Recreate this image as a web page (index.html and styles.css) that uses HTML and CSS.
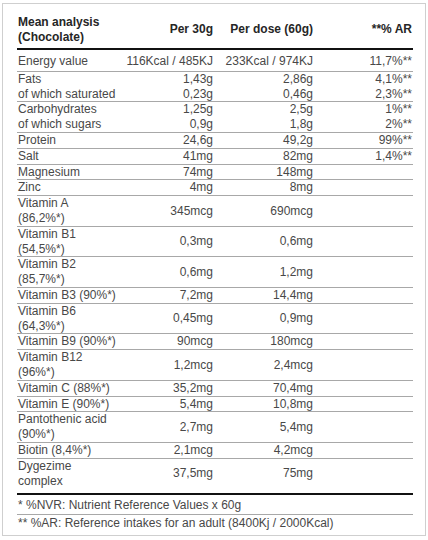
FILE: index.html
```html
<!DOCTYPE html>
<html>
<head>
<meta charset="utf-8">
<link rel="stylesheet" href="styles.css">
</head>
<body>
<div class="panel">
<table class="nutri">
<colgroup><col class="c1"><col class="c2"><col class="c3"><col class="c4"></colgroup>
<thead>
<tr class="head"><th class="name">Mean analysis<br>(Chocolate)</th><th>Per 30g</th><th>Per dose (60g)</th><th>**% AR</th></tr>
</thead>
<tbody>
<tr class="first"><td class="name">Energy value</td><td>116Kcal / 485KJ</td><td>233Kcal / 974KJ</td><td>11,7%**</td></tr>
<tr><td class="name">Fats<br>of which saturated</td><td>1,43g<br>0,23g</td><td>2,86g<br>0,46g</td><td>4,1%**<br>2,3%**</td></tr>
<tr><td class="name">Carbohydrates<br>of which sugars</td><td>1,25g<br>0,9g</td><td>2,5g<br>1,8g</td><td>1%**<br>2%**</td></tr>
<tr><td class="name">Protein</td><td>24,6g</td><td>49,2g</td><td>99%**</td></tr>
<tr><td class="name">Salt</td><td>41mg</td><td>82mg</td><td>1,4%**</td></tr>
<tr><td class="name">Magnesium</td><td>74mg</td><td>148mg</td><td></td></tr>
<tr><td class="name">Zinc</td><td>4mg</td><td>8mg</td><td></td></tr>
<tr><td class="name">Vitamin A<br>(86,2%*)</td><td>345mcg</td><td>690mcg</td><td></td></tr>
<tr><td class="name">Vitamin B1<br>(54,5%*)</td><td>0,3mg</td><td>0,6mg</td><td></td></tr>
<tr><td class="name">Vitamin B2<br>(85,7%*)</td><td>0,6mg</td><td>1,2mg</td><td></td></tr>
<tr><td class="name">Vitamin B3 (90%*)</td><td>7,2mg</td><td>14,4mg</td><td></td></tr>
<tr><td class="name">Vitamin B6<br>(64,3%*)</td><td>0,45mg</td><td>0,9mg</td><td></td></tr>
<tr><td class="name">Vitamin B9 (90%*)</td><td>90mcg</td><td>180mcg</td><td></td></tr>
<tr><td class="name">Vitamin B12<br>(96%*)</td><td>1,2mcg</td><td>2,4mcg</td><td></td></tr>
<tr><td class="name">Vitamin C (88%*)</td><td>35,2mg</td><td>70,4mg</td><td></td></tr>
<tr><td class="name">Vitamin E (90%*)</td><td>5,4mg</td><td>10,8mg</td><td></td></tr>
<tr><td class="name">Pantothenic acid<br>(90%*)</td><td>2,7mg</td><td>5,4mg</td><td></td></tr>
<tr><td class="name">Biotin (8,4%*)</td><td>2,1mcg</td><td>4,2mcg</td><td></td></tr>
<tr class="last"><td class="name">Dygezime<br>complex</td><td>37,5mg</td><td>75mg</td><td></td></tr>
</tbody>
<tfoot>
<tr class="note1"><td class="note" colspan="4">* %NVR: Nutrient Reference Values x 60g</td></tr>
<tr class="note2"><td class="note" colspan="4">** %AR: Reference intakes for an adult (8400Kj / 2000Kcal)</td></tr>
</tfoot>
</table>
</div>
</body>
</html>
```
FILE: styles.css
```css
html, body {
  margin: 0;
  padding: 0;
  background: #ffffff;
}
body {
  font-family: "Liberation Sans", Arial, sans-serif;
  font-size: 12px;
  color: #484848;
}
.panel {
  margin: 3px 2px 0 2px;
  border: 1px solid #cfcfcf;
  padding: 11px 12px 0 14px;
  box-sizing: border-box;
  width: 424px;
  height: 533px;
}
.nutri {
  width: 396px;
  border-collapse: collapse;
  table-layout: fixed;
}
.c1 { width: 100px; }
.c2 { width: 97px; }
.c3 { width: 100px; }
.c4 { width: 99px; }
.nutri th, .nutri td {
  padding: 0 1px 0 0;
  line-height: 14.8px;
  text-align: right;
  vertical-align: middle;
  white-space: nowrap;
  border-bottom: 1px solid #a8a8a8;
}
.nutri .name {
  text-align: left;
  padding: 0 0 0 1px;
}
.nutri .head th {
  font-weight: bold;
  color: #262626;
  line-height: 14.5px;
  padding-bottom: 4px;
  border-bottom: 2px solid #111;
}
.nutri .first td {
  padding-top: 4px;
  padding-bottom: 2px;
}
.nutri .last td {
  padding-bottom: 5px;
  border-bottom: 2px solid #111;
}
.nutri .note {
  text-align: left;
  padding-left: 1px;
}
.nutri .note1 .note {
  padding-top: 3px;
  padding-bottom: 1px;
}
.nutri .note2 .note {
  border-bottom: none;
  padding-top: 1px;
}
```
